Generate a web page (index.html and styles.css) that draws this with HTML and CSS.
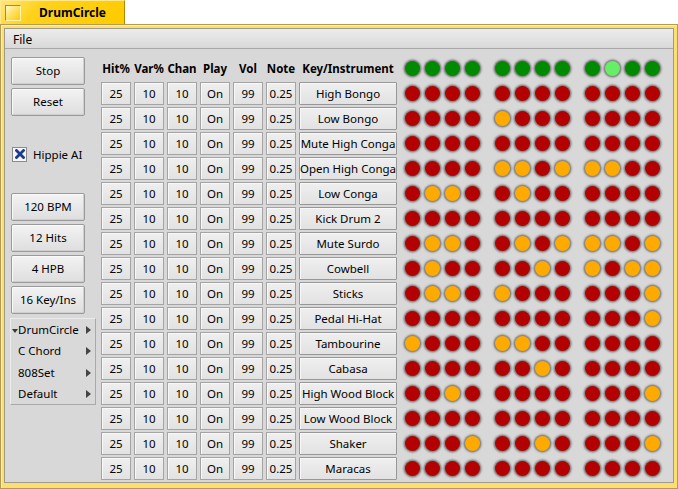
FILE: index.html
```html
<!DOCTYPE html>
<html>
<head>
<meta charset="utf-8">
<title>DrumCircle</title>
<link rel="stylesheet" href="styles.css">
</head>
<body>
<div class="win">
  <div class="tab"><span class="close"></span><span class="title">DrumCircle</span></div>
  <div class="frame">
    <div class="content">
      <div class="menubar"><span class="menu">File</span></div>
      <div class="main">
        <div class="side">
          <div class="btn">Stop</div>
          <div class="btn">Reset</div>
          <label class="check">
            <span class="box"><svg width="10" height="10" viewBox="0 0 10 10"><path d="M1.5 1.5 L8.5 8.5 M8.5 1.5 L1.5 8.5" stroke="#1b3c94" stroke-width="2.8" stroke-linecap="square"/></svg></span>
            <span>Hippie AI</span>
          </label>
          <div class="btn first">120 BPM</div>
          <div class="btn">12 Hits</div>
          <div class="btn">4 HPB</div>
          <div class="btn">16 Key/Ins</div>
          <div class="list">
            <div class="item sel"><span class="mark"></span>DrumCircle<span class="arrow"></span></div>
            <div class="item">C Chord<span class="arrow"></span></div>
            <div class="item">808Set<span class="arrow"></span></div>
            <div class="item">Default<span class="arrow"></span></div>
          </div>
        </div>
        <div class="table">
          <div class="hd">Hit%</div><div class="hd">Var%</div><div class="hd">Chan</div><div class="hd">Play</div><div class="hd">Vol</div><div class="hd">Note</div><div class="hd">Key/Instrument</div>
          <div class="dots"><div class="grp"><i class="g"></i><i class="g"></i><i class="g"></i><i class="g"></i></div><div class="grp"><i class="g"></i><i class="g"></i><i class="g"></i><i class="g"></i></div><div class="grp"><i class="g"></i><i class="lg"></i><i class="g"></i><i class="g"></i></div></div>

          <div class="c">25</div><div class="c">10</div><div class="c">10</div><div class="c">On</div><div class="c">99</div><div class="c">0.25</div><div class="c key">High Bongo</div>
          <div class="dots"><div class="grp"><i class="r"></i><i class="r"></i><i class="r"></i><i class="r"></i></div><div class="grp"><i class="r"></i><i class="r"></i><i class="r"></i><i class="r"></i></div><div class="grp"><i class="r"></i><i class="r"></i><i class="r"></i><i class="r"></i></div></div>

          <div class="c">25</div><div class="c">10</div><div class="c">10</div><div class="c">On</div><div class="c">99</div><div class="c">0.25</div><div class="c key">Low Bongo</div>
          <div class="dots"><div class="grp"><i class="r"></i><i class="r"></i><i class="r"></i><i class="r"></i></div><div class="grp"><i class="o"></i><i class="r"></i><i class="r"></i><i class="r"></i></div><div class="grp"><i class="r"></i><i class="r"></i><i class="r"></i><i class="r"></i></div></div>

          <div class="c">25</div><div class="c">10</div><div class="c">10</div><div class="c">On</div><div class="c">99</div><div class="c">0.25</div><div class="c key">Mute High Conga</div>
          <div class="dots"><div class="grp"><i class="r"></i><i class="r"></i><i class="r"></i><i class="r"></i></div><div class="grp"><i class="r"></i><i class="r"></i><i class="r"></i><i class="r"></i></div><div class="grp"><i class="r"></i><i class="r"></i><i class="r"></i><i class="r"></i></div></div>

          <div class="c">25</div><div class="c">10</div><div class="c">10</div><div class="c">On</div><div class="c">99</div><div class="c">0.25</div><div class="c key">Open High Conga</div>
          <div class="dots"><div class="grp"><i class="r"></i><i class="r"></i><i class="r"></i><i class="r"></i></div><div class="grp"><i class="o"></i><i class="o"></i><i class="r"></i><i class="o"></i></div><div class="grp"><i class="o"></i><i class="o"></i><i class="r"></i><i class="r"></i></div></div>

          <div class="c">25</div><div class="c">10</div><div class="c">10</div><div class="c">On</div><div class="c">99</div><div class="c">0.25</div><div class="c key">Low Conga</div>
          <div class="dots"><div class="grp"><i class="r"></i><i class="o"></i><i class="o"></i><i class="r"></i></div><div class="grp"><i class="r"></i><i class="o"></i><i class="r"></i><i class="r"></i></div><div class="grp"><i class="r"></i><i class="r"></i><i class="r"></i><i class="r"></i></div></div>

          <div class="c">25</div><div class="c">10</div><div class="c">10</div><div class="c">On</div><div class="c">99</div><div class="c">0.25</div><div class="c key">Kick Drum 2</div>
          <div class="dots"><div class="grp"><i class="r"></i><i class="r"></i><i class="r"></i><i class="r"></i></div><div class="grp"><i class="r"></i><i class="r"></i><i class="r"></i><i class="r"></i></div><div class="grp"><i class="r"></i><i class="r"></i><i class="r"></i><i class="r"></i></div></div>

          <div class="c">25</div><div class="c">10</div><div class="c">10</div><div class="c">On</div><div class="c">99</div><div class="c">0.25</div><div class="c key">Mute Surdo</div>
          <div class="dots"><div class="grp"><i class="r"></i><i class="o"></i><i class="o"></i><i class="r"></i></div><div class="grp"><i class="r"></i><i class="o"></i><i class="r"></i><i class="o"></i></div><div class="grp"><i class="o"></i><i class="o"></i><i class="r"></i><i class="o"></i></div></div>

          <div class="c">25</div><div class="c">10</div><div class="c">10</div><div class="c">On</div><div class="c">99</div><div class="c">0.25</div><div class="c key">Cowbell</div>
          <div class="dots"><div class="grp"><i class="r"></i><i class="o"></i><i class="r"></i><i class="r"></i></div><div class="grp"><i class="r"></i><i class="r"></i><i class="o"></i><i class="r"></i></div><div class="grp"><i class="o"></i><i class="r"></i><i class="o"></i><i class="o"></i></div></div>

          <div class="c">25</div><div class="c">10</div><div class="c">10</div><div class="c">On</div><div class="c">99</div><div class="c">0.25</div><div class="c key">Sticks</div>
          <div class="dots"><div class="grp"><i class="r"></i><i class="o"></i><i class="o"></i><i class="r"></i></div><div class="grp"><i class="o"></i><i class="r"></i><i class="r"></i><i class="r"></i></div><div class="grp"><i class="r"></i><i class="r"></i><i class="r"></i><i class="o"></i></div></div>

          <div class="c">25</div><div class="c">10</div><div class="c">10</div><div class="c">On</div><div class="c">99</div><div class="c">0.25</div><div class="c key">Pedal Hi-Hat</div>
          <div class="dots"><div class="grp"><i class="r"></i><i class="r"></i><i class="r"></i><i class="r"></i></div><div class="grp"><i class="r"></i><i class="r"></i><i class="r"></i><i class="r"></i></div><div class="grp"><i class="r"></i><i class="r"></i><i class="r"></i><i class="o"></i></div></div>

          <div class="c">25</div><div class="c">10</div><div class="c">10</div><div class="c">On</div><div class="c">99</div><div class="c">0.25</div><div class="c key">Tambourine</div>
          <div class="dots"><div class="grp"><i class="o"></i><i class="r"></i><i class="r"></i><i class="r"></i></div><div class="grp"><i class="o"></i><i class="o"></i><i class="r"></i><i class="r"></i></div><div class="grp"><i class="r"></i><i class="r"></i><i class="r"></i><i class="r"></i></div></div>

          <div class="c">25</div><div class="c">10</div><div class="c">10</div><div class="c">On</div><div class="c">99</div><div class="c">0.25</div><div class="c key">Cabasa</div>
          <div class="dots"><div class="grp"><i class="r"></i><i class="r"></i><i class="r"></i><i class="r"></i></div><div class="grp"><i class="r"></i><i class="r"></i><i class="o"></i><i class="r"></i></div><div class="grp"><i class="r"></i><i class="r"></i><i class="r"></i><i class="r"></i></div></div>

          <div class="c">25</div><div class="c">10</div><div class="c">10</div><div class="c">On</div><div class="c">99</div><div class="c">0.25</div><div class="c key">High Wood Block</div>
          <div class="dots"><div class="grp"><i class="r"></i><i class="r"></i><i class="o"></i><i class="r"></i></div><div class="grp"><i class="r"></i><i class="r"></i><i class="r"></i><i class="r"></i></div><div class="grp"><i class="r"></i><i class="r"></i><i class="r"></i><i class="o"></i></div></div>

          <div class="c">25</div><div class="c">10</div><div class="c">10</div><div class="c">On</div><div class="c">99</div><div class="c">0.25</div><div class="c key">Low Wood Block</div>
          <div class="dots"><div class="grp"><i class="r"></i><i class="r"></i><i class="r"></i><i class="r"></i></div><div class="grp"><i class="r"></i><i class="r"></i><i class="r"></i><i class="r"></i></div><div class="grp"><i class="r"></i><i class="r"></i><i class="r"></i><i class="r"></i></div></div>

          <div class="c">25</div><div class="c">10</div><div class="c">10</div><div class="c">On</div><div class="c">99</div><div class="c">0.25</div><div class="c key">Shaker</div>
          <div class="dots"><div class="grp"><i class="r"></i><i class="r"></i><i class="r"></i><i class="o"></i></div><div class="grp"><i class="r"></i><i class="r"></i><i class="o"></i><i class="r"></i></div><div class="grp"><i class="r"></i><i class="r"></i><i class="r"></i><i class="o"></i></div></div>

          <div class="c">25</div><div class="c">10</div><div class="c">10</div><div class="c">On</div><div class="c">99</div><div class="c">0.25</div><div class="c key">Maracas</div>
          <div class="dots"><div class="grp"><i class="r"></i><i class="r"></i><i class="r"></i><i class="r"></i></div><div class="grp"><i class="r"></i><i class="r"></i><i class="r"></i><i class="r"></i></div><div class="grp"><i class="r"></i><i class="r"></i><i class="r"></i><i class="r"></i></div></div>
        </div>
      </div>
    </div>
  </div>
</div>
</body>
</html>
```
FILE: styles.css
```css
* { box-sizing: border-box; }

body {
  margin: 0;
  background: #ffffff;
  font-family: "Noto Sans", "DejaVu Sans", sans-serif;
  font-size: 11.5px;
  color: #000;
}

.win {
  width: 678px;
  height: 489px;
  display: flex;
  flex-direction: column;
}

/* window tab */
.tab {
  width: 125px;
  height: 24px;
  background: linear-gradient(135deg, #ffe680 0%, #ffd21a 30%, #ffcb00 100%);
  border: 1px solid #c9a400;
  border-left-color: #ffe98a;
  border-top-color: #ffe98a;
  border-right-color: #a98a00;
  border-bottom: none;
  display: flex;
  align-items: center;
}

.close {
  width: 16px;
  height: 16px;
  margin-left: 4px;
  border: 1px solid #b08f00;
  border-right-color: #fff4b0;
  border-bottom-color: #fff4b0;
  background: linear-gradient(135deg, #fff9d0 0%, #ffe060 50%, #ffcb00 100%);
}

.title {
  margin-left: 18px;
  font-weight: bold;
  font-size: 12px;
}

/* window frame */
.frame {
  flex: 1;
  border: 1px solid #b49b50;
  background: #fbdf74;
  padding: 3px 3px 5px 3px;
  box-shadow: inset 1px 1px 0 #fff0b0;
  display: flex;
}

.content {
  flex: 1;
  border: 1px solid #9f9a8c;
  background: #d8d8d8;
  display: flex;
  flex-direction: column;
}

.menubar {
  height: 20px;
  background: linear-gradient(#ececec, #d9d9d9);
  border-bottom: 1px solid #a8a8a8;
  padding-left: 8px;
  padding-top: 1px;
  display: flex;
  align-items: center;
  font-size: 12px;
}

.main {
  flex: 1;
  display: flex;
  padding: 8px 0 0 6px;
  gap: 4px;
}

/* left controls */
.side {
  width: 86px;
  display: flex;
  flex-direction: column;
  gap: 3px;
}

.btn {
  width: 74px;
  height: 28px;
  padding-bottom: 1px;
  border: 1px solid #9a9a9a;
  border-radius: 2px;
  background: linear-gradient(#f3f3f3, #dedede);
  box-shadow: inset 1px 1px 0 #fafafa, inset -1px -1px 0 #cfcfcf;
  display: flex;
  align-items: center;
  justify-content: center;
}

.btn.first { margin-top: 28px; }

.check {
  margin-top: 27px;
  margin-left: 1px;
  height: 16px;
  display: flex;
  align-items: center;
  gap: 6px;
}

.box {
  width: 15px;
  height: 15px;
  border: 1px solid #8c8c8c;
  background: #f6f6f6;
  display: flex;
  align-items: center;
  justify-content: center;
}

.list {
  margin-left: -1px;
  width: 86px;
  margin-top: 1px;
  height: 87px;
  background: #d9d9d9;
  border-left: 1px solid #ececec;
  border-top: 1px solid #ececec;
  border-right: 1px solid #a9a9a9;
  border-bottom: 1px solid #a9a9a9;
  display: flex;
  flex-direction: column;
}

.item {
  height: 22px;
  padding-left: 7px;
  display: flex;
  align-items: center;
  position: relative;
}

.mark {
  position: absolute;
  left: 1px;
  top: 10px;
  border-left: 3px solid transparent;
  border-right: 3px solid transparent;
  border-top: 4px solid #3a3a3a;
}

.arrow {
  position: absolute;
  right: 4px;
  top: 7px;
  border-top: 4px solid transparent;
  border-bottom: 4px solid transparent;
  border-left: 5px solid #444;
}

/* grid of settings and beat lights */
.table {
  display: grid;
  grid-template-columns: repeat(6, 30px) 98px auto;
  grid-auto-rows: 23px;
  column-gap: 3px;
  row-gap: 2px;
  align-content: start;
}

.hd {
  font-weight: bold;
  padding-bottom: 1px;
  display: flex;
  align-items: center;
  justify-content: center;
  white-space: nowrap;
}

.c {
  padding-bottom: 1px;
  border: 1px solid #a4a4a4;
  background: linear-gradient(#efefef, #e2e2e2);
  box-shadow: inset 1px 1px 0 #f8f8f8;
  display: flex;
  align-items: center;
  justify-content: center;
  white-space: nowrap;
}

.c.key {
  border-color: #979797;
  border-radius: 1px;
}

.dots {
  margin-left: 2px;
  display: flex;
  gap: 10px;
}

.grp { display: flex; }

.grp i {
  width: 20px;
  height: 23px;
  display: flex;
  align-items: center;
  justify-content: center;
}

.grp i::before {
  content: "";
  width: 15px;
  height: 15px;
  border-radius: 50%;
  background: var(--dot);
  box-shadow: 0 0 2px 1.5px rgba(95, 95, 95, 0.8);
}

.r { --dot: #b30000; }
.o { --dot: #ffaa00; }
.g { --dot: #008a00; }
.lg { --dot: #66ee66; }
```
